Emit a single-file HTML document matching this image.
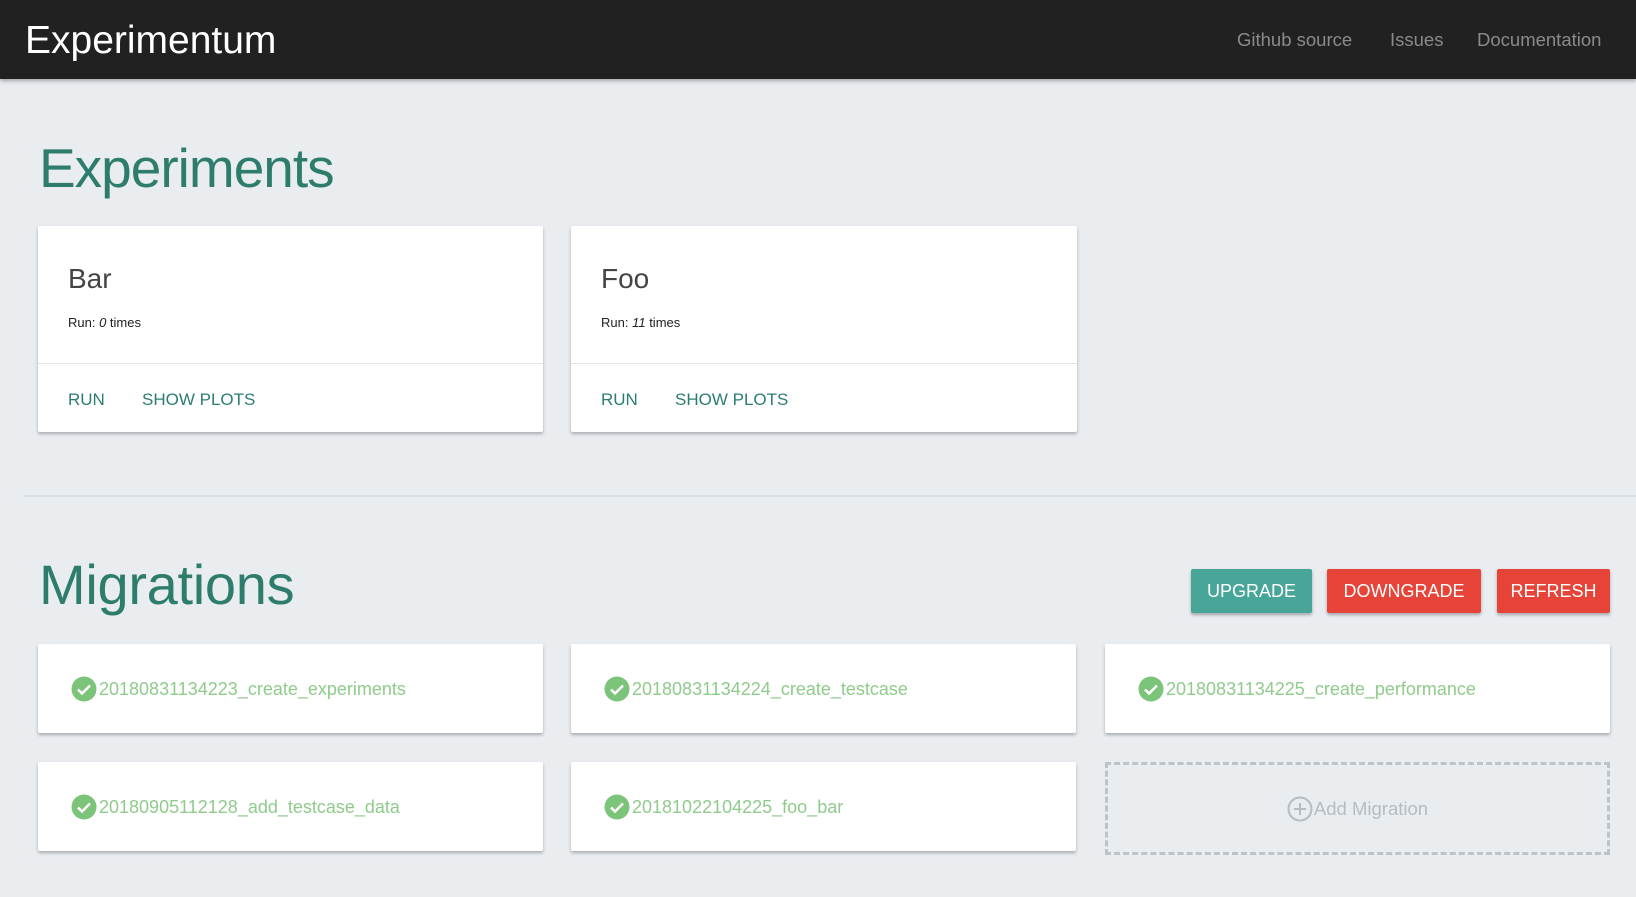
<!DOCTYPE html>
<html><head><meta charset="utf-8"><style>
*{margin:0;padding:0;box-sizing:border-box}
body{width:1636px;height:897px;background:#e9edf0;font-family:"Liberation Sans",sans-serif;position:relative;overflow:hidden}
.nav{position:absolute;left:0;top:0;width:1636px;height:79px;background:#212121;box-shadow:0 2px 4px rgba(0,0,0,.3)}
.brand{position:absolute;left:25px;top:19px;font-size:39px;color:#fff;line-height:44px}
.nl{position:absolute;top:28px;font-size:18.5px;color:#8a8a8a;line-height:24px}
h1{position:absolute;left:39px;font-weight:normal;color:#2e7d6c;line-height:66px}
.card{position:absolute;background:#fff;border-radius:2px;box-shadow:0 2px 3px rgba(0,0,0,.28)}
.ct{position:absolute;left:30px;top:36px;font-size:28px;color:#444;line-height:34px}
.cr{position:absolute;left:30px;top:89px;font-size:13px;color:#222}
.div{position:absolute;left:0;right:0;top:137px;border-top:1px solid #e4e4e4}
.act{position:absolute;top:164px;font-size:17px;color:#2b7d74}
.btn{position:absolute;top:569px;height:44px;color:#fff;font-size:18px;line-height:44px;text-align:center;border-radius:2px;box-shadow:0 2px 3px rgba(0,0,0,.3)}
.mig{position:absolute;width:505px;height:89px}
.mig .t{position:absolute;left:33px;top:32px;font-size:18px;color:#8fcb8b;display:flex;align-items:center;line-height:24px}
.mig svg{margin-right:2px}
</style></head><body>
<div class="nav">
<div class="brand">Experimentum</div>
<div class="nl" style="left:1237px">Github source</div>
<div class="nl" style="left:1390px">Issues</div>
<div class="nl" style="left:1477px">Documentation</div>
</div>
<h1 style="top:135px;font-size:55px;letter-spacing:-1px">Experiments</h1>
<div class="card" style="left:38px;top:226px;width:505px;height:206px">
<div class="ct">Bar</div><div class="cr">Run: <i>0</i> times</div><div class="div"></div>
<div class="act" style="left:30px">RUN</div><div class="act" style="left:104px">SHOW PLOTS</div></div>
<div class="card" style="left:571px;top:226px;width:506px;height:206px">
<div class="ct">Foo</div><div class="cr">Run: <i>11</i> times</div><div class="div"></div>
<div class="act" style="left:30px">RUN</div><div class="act" style="left:104px">SHOW PLOTS</div></div>
<div style="position:absolute;left:24px;right:0;top:495px;border-top:2px solid #d9dee2"></div>
<h1 style="top:552px;font-size:56px;letter-spacing:-0.3px">Migrations</h1>
<div class="btn" style="left:1191px;width:121px;background:#48a699">UPGRADE</div>
<div class="btn" style="left:1327px;width:154px;background:#e64438">DOWNGRADE</div>
<div class="btn" style="left:1497px;width:113px;background:#e64438">REFRESH</div>

<div class="card mig" style="left:38px;top:644px"><div class="t"><svg width="26" height="26" viewBox="0 0 26 26"><circle cx="13" cy="13" r="12.5" fill="#7cc47a"/><path d="M7 13.5l4 4 8-8" stroke="#fff" stroke-width="2.5" fill="none"/></svg>20180831134223_create_experiments</div></div>
<div class="card mig" style="left:571px;top:644px"><div class="t"><svg width="26" height="26" viewBox="0 0 26 26"><circle cx="13" cy="13" r="12.5" fill="#7cc47a"/><path d="M7 13.5l4 4 8-8" stroke="#fff" stroke-width="2.5" fill="none"/></svg>20180831134224_create_testcase</div></div>
<div class="card mig" style="left:1105px;top:644px"><div class="t"><svg width="26" height="26" viewBox="0 0 26 26"><circle cx="13" cy="13" r="12.5" fill="#7cc47a"/><path d="M7 13.5l4 4 8-8" stroke="#fff" stroke-width="2.5" fill="none"/></svg>20180831134225_create_performance</div></div>
<div class="card mig" style="left:38px;top:762px"><div class="t"><svg width="26" height="26" viewBox="0 0 26 26"><circle cx="13" cy="13" r="12.5" fill="#7cc47a"/><path d="M7 13.5l4 4 8-8" stroke="#fff" stroke-width="2.5" fill="none"/></svg>20180905112128_add_testcase_data</div></div>
<div class="card mig" style="left:571px;top:762px"><div class="t"><svg width="26" height="26" viewBox="0 0 26 26"><circle cx="13" cy="13" r="12.5" fill="#7cc47a"/><path d="M7 13.5l4 4 8-8" stroke="#fff" stroke-width="2.5" fill="none"/></svg>20181022104225_foo_bar</div></div>
<div style="position:absolute;left:1105px;top:762px;width:505px;height:93px;border:3px dashed #bcc3c9;display:flex;align-items:center;justify-content:center;font-size:18.5px;color:#b5bcc2">
<svg width="26" height="26" viewBox="0 0 26 26" style="margin-right:1px"><circle cx="13" cy="13" r="11.5" fill="none" stroke="#b5bcc2" stroke-width="2"/><path d="M13 7v12M7 13h12" stroke="#b5bcc2" stroke-width="2"/></svg>Add Migration</div>
</body></html>
